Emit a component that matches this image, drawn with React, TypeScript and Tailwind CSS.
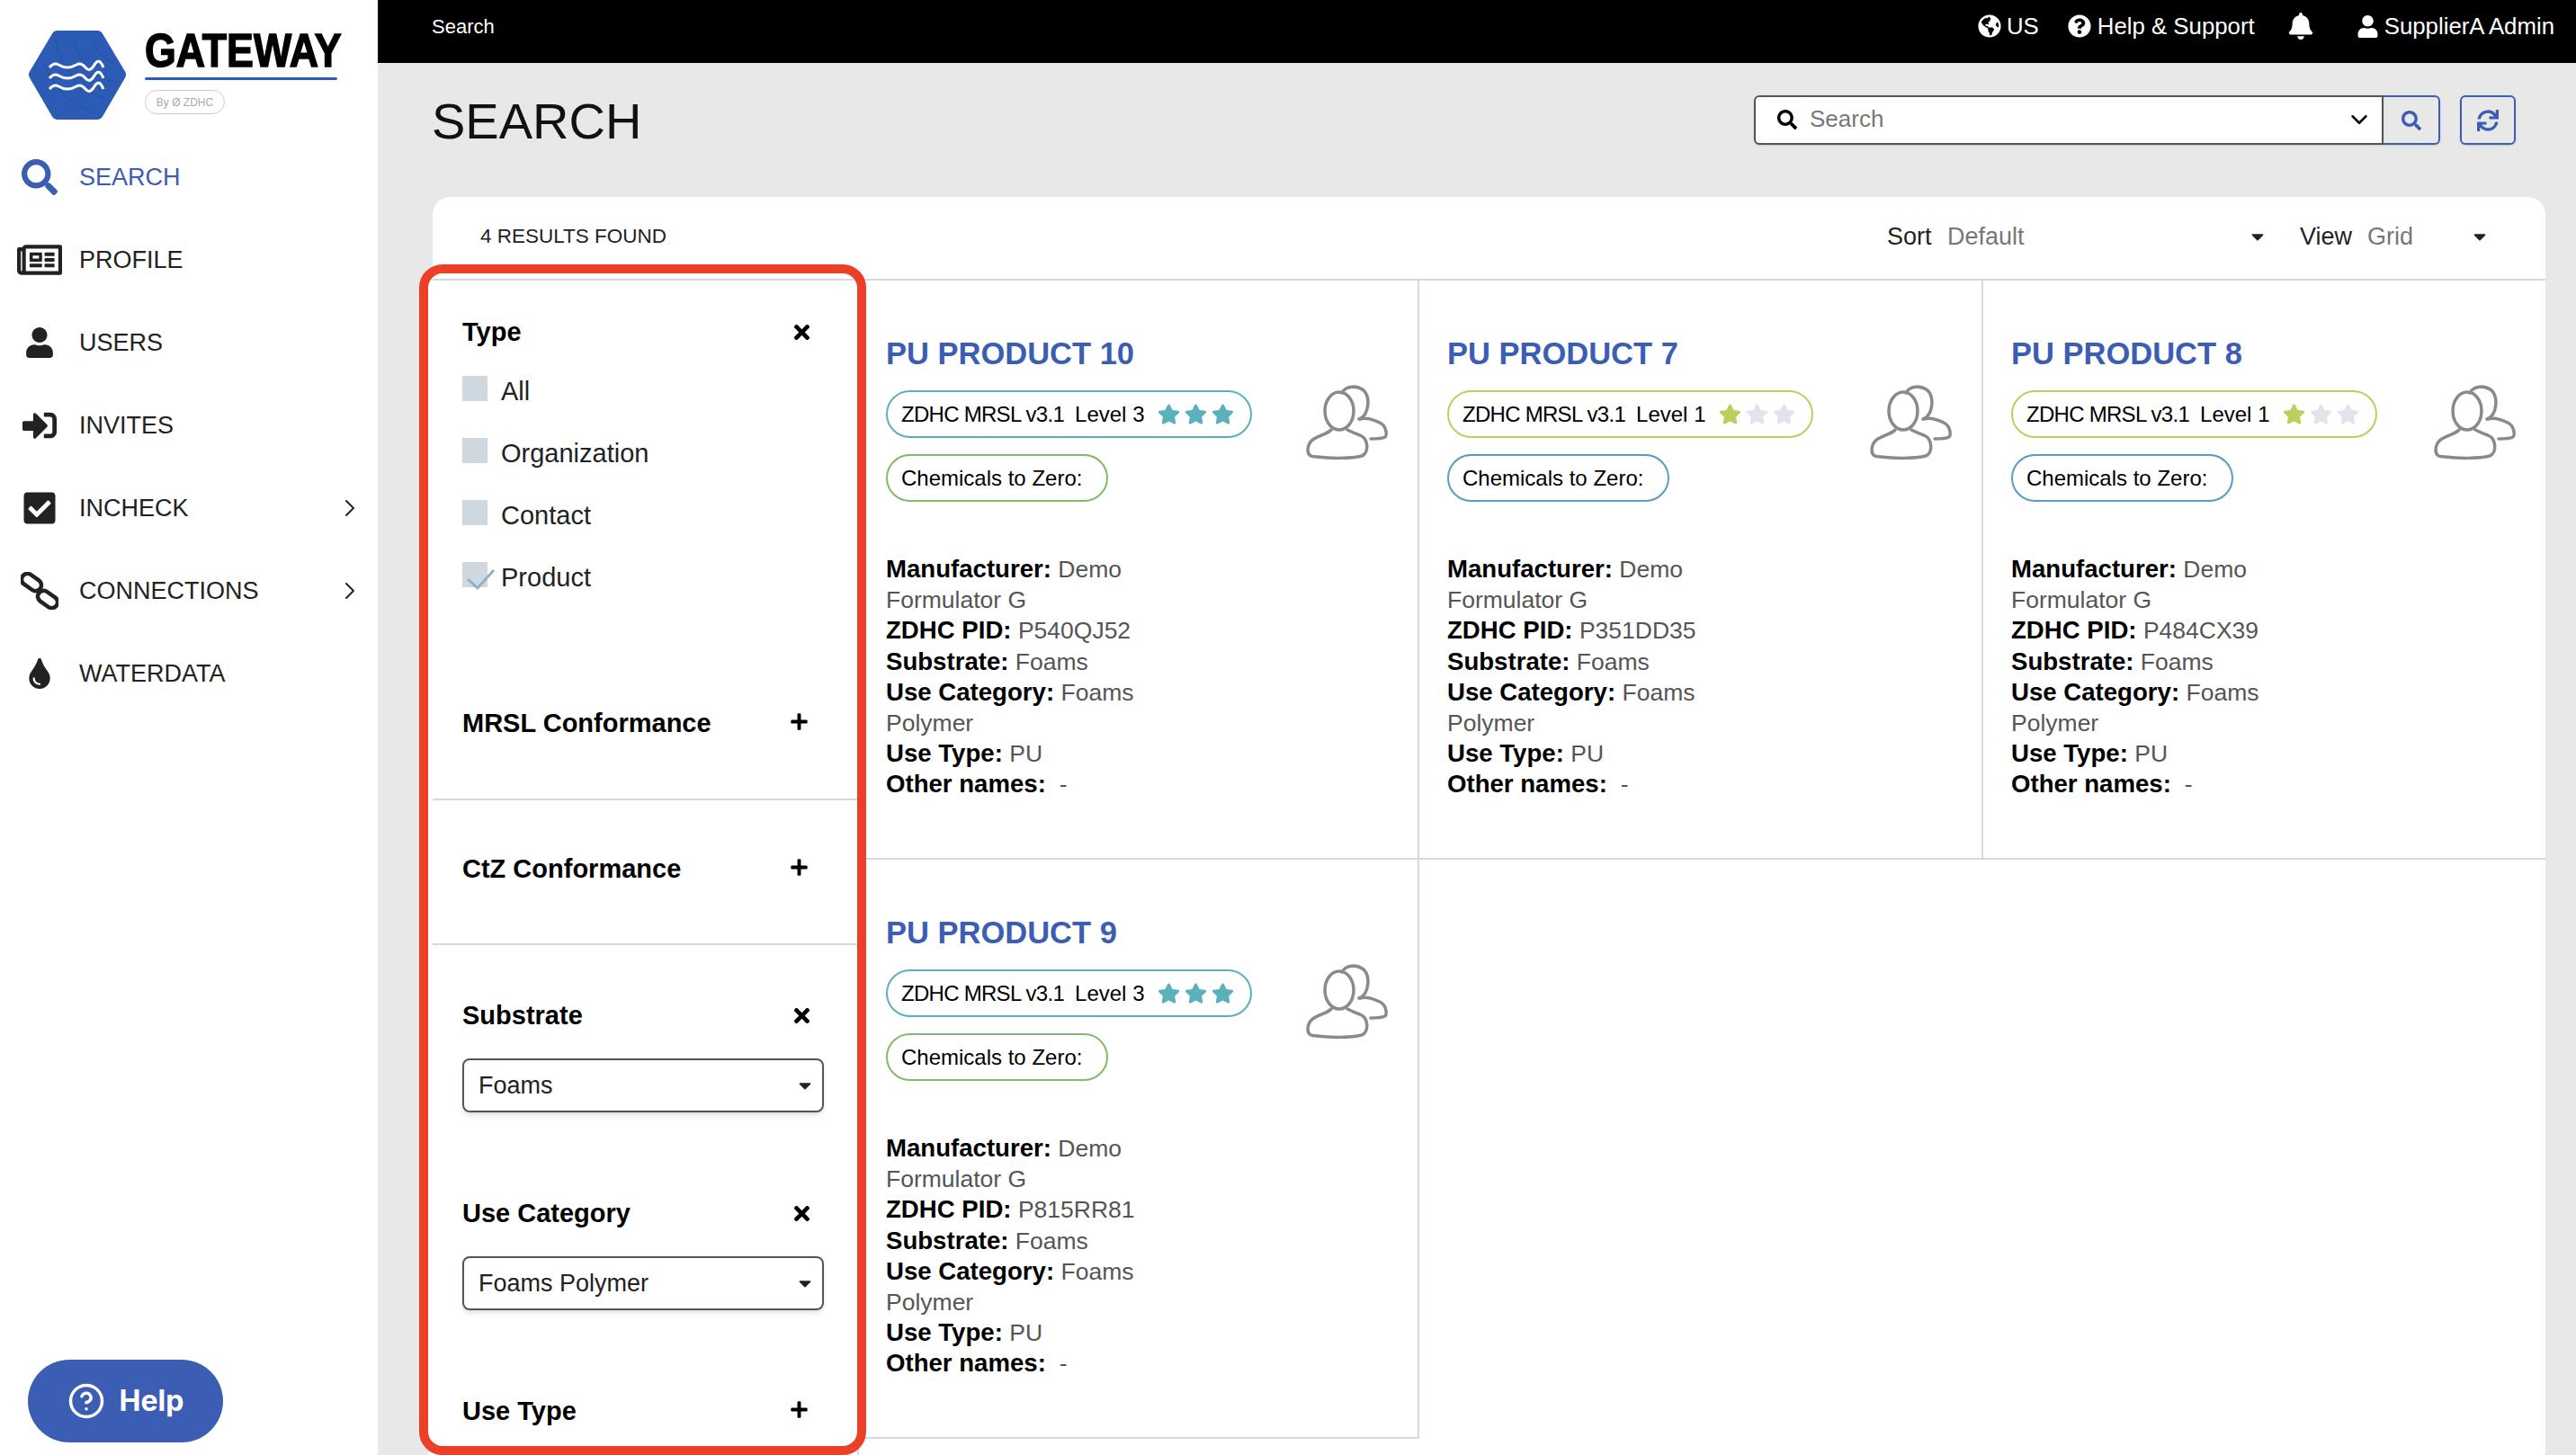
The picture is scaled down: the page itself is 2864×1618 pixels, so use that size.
import React from 'react';
import {
  FaSearch,
  FaRegNewspaper,
  FaUser,
  FaSignInAlt,
  FaCheckSquare,
  FaTint,
  FaGlobeAmericas,
  FaQuestionCircle,
  FaBell,
  FaTimes,
  FaPlus,
  FaSync,
  FaStar,
  FaCaretDown,
} from 'react-icons/fa';
import { ChevronDown, ChevronRight, CircleHelp } from 'lucide-react';

const Logo = () => (
  <div className="flex gap-[20px] pl-[31px] pt-[33px]">
    <svg width="110" height="101" viewBox="0 0 110 101" className="shrink-0">
      <defs>
        <clipPath id="hex">
          <path d="M33 8 H77 L102 50 L77 93 H33 L8 50 Z" />
        </clipPath>
      </defs>
      <path
        d="M33 8 H77 L102 50 L77 93 H33 L8 50 Z"
        fill="#2c5bb5"
        stroke="#2c5bb5"
        strokeWidth="14"
        strokeLinejoin="round"
      />
      <g fill="none" stroke="#2450a3" strokeWidth="1" clipPath="url(#hex)">
        <circle cx="110" cy="0" r="40" />
        <circle cx="110" cy="0" r="60" />
        <circle cx="110" cy="0" r="80" />
        <circle cx="110" cy="0" r="100" />
      </g>
      <g fill="none" stroke="#fff" strokeWidth="3">
        <path d="M24 42 q 5 -6 10 -3 t 10 3 t 10 -3 t 10 3 t 10 -3 t 10 3" />
        <path d="M24 54 q 5 -6 10 -3 t 10 3 t 10 -3 t 10 3 t 10 -3 t 10 3" />
        <path d="M24 66 q 5 -6 10 -3 t 10 3 t 10 -3 t 10 3 t 10 -3 t 10 3" />
      </g>
    </svg>
    <div className="flex flex-col items-start">
      <div className="h-[46px] w-[218px] text-[52px] font-bold leading-[46px] text-black origin-left scale-x-[0.86] [-webkit-text-stroke:1.5px_black] whitespace-nowrap">
        GATEWAY
      </div>
      <div className="mt-[7px] h-[3px] w-[214px] rounded-full bg-[#2c5bb5]" />
      <div className="mt-[11px] flex h-[27px] w-[89px] items-center justify-center rounded-full border border-[#ccc] text-[12px] text-[#aaa]">
        By Ø ZDHC
      </div>
    </div>
  </div>
);

const ChainIcon = () => (
  <svg width="42" height="42" viewBox="0 0 42 42" fill="none" stroke="#222" strokeWidth="4.5">
    <rect x="0" y="5" width="24" height="13" rx="6.5" transform="rotate(35 12 11.5)" />
    <rect x="18" y="24" width="24" height="13" rx="6.5" transform="rotate(35 30 30.5)" />
  </svg>
);

const navItems = [
  { label: 'SEARCH', icon: <FaSearch size={40} />, active: true },
  { label: 'PROFILE', icon: <FaRegNewspaper size={50} /> },
  { label: 'USERS', icon: <FaUser size={34} /> },
  { label: 'INVITES', icon: <FaSignInAlt size={38} /> },
  { label: 'INCHECK', icon: <FaCheckSquare size={40} />, more: true },
  { label: 'CONNECTIONS', icon: <ChainIcon />, more: true },
  { label: 'WATERDATA', icon: <FaTint size={34} /> },
];

const Sidebar = () => (
  <aside className="flex w-[420px] shrink-0 flex-col bg-white pb-[14px]">
    <Logo />
    <nav className="mt-[17px]">
      {navItems.map((item) => (
        <div
          key={item.label}
          className={`flex h-[92px] items-center pr-[15px] text-[27px] ${item.active ? 'text-[#3b5db4]' : 'text-[#222]'}`}
        >
          <span className="flex w-[88px] shrink-0 justify-center">{item.icon}</span>
          <span className="flex-1">{item.label}</span>
          {item.more && <ChevronRight size={32} strokeWidth={1.5} />}
        </div>
      ))}
    </nav>
    <div className="ml-[31px] mt-auto flex h-[92px] w-[217px] items-center justify-center gap-[16px] rounded-full bg-[#3b5db4] font-['Inter',sans-serif] text-[32px] font-bold text-white">
      <CircleHelp size={42} strokeWidth={2} />
      Help
    </div>
  </aside>
);

const TopBar = () => (
  <header className="flex h-[70px] shrink-0 items-center bg-black pb-[12px] pl-[60px] pr-[24px] text-white">
    <span className="text-[22px]">Search</span>
    <div className="ml-auto flex items-center text-[25.8px]">
      <FaGlobeAmericas size={26} />
      <span className="ml-[6px]">US</span>
      <FaQuestionCircle size={26} className="ml-[32px]" />
      <span className="ml-[7px]">Help &amp; Support</span>
      <FaBell size={30} className="ml-[36px]" />
      <FaUser size={25} className="ml-[47px]" />
      <span className="ml-[6px]">SupplierA Admin</span>
    </div>
  </header>
);

const TitleRow = () => (
  <div className="flex h-[149px] shrink-0 items-start pl-[60px] pr-[67px]">
    <h1 className="mt-[30px] text-[56px] leading-[70px] text-[#111]">SEARCH</h1>
    <div className="ml-auto mt-[36px] flex">
      <div className="flex h-[55px] w-[700px] items-center rounded-l-[6px] border-2 border-[#555] bg-white pb-[2px] pl-[24px] pr-[10px] text-[26px] text-[#777] shadow-sm">
        <FaSearch size={22} className="text-black" />
        <span className="ml-[14px]">Search</span>
        <ChevronDown size={30} className="ml-auto text-black" />
      </div>
      <div className="flex h-[55px] w-[63px] items-center justify-center rounded-r-[6px] border-2 border-l-0 border-[#3b5db4] text-[#3b5db4] shadow-sm">
        <FaSearch size={22} />
      </div>
      <div className="ml-[22px] flex h-[55px] w-[62px] items-center justify-center rounded-[6px] border-2 border-[#3b5db4] text-[#3b5db4] shadow-sm">
        <FaSync size={24} />
      </div>
    </div>
  </div>
);

const ResultsHeader = () => (
  <div className="flex h-[93px] shrink-0 items-center border-b-2 border-[#d3d9dd] pb-[3px] pl-[53px] pr-[62px]">
    <span className="text-[22.5px] text-[#222]">4 RESULTS FOUND</span>
    <span className="ml-auto w-[67px] text-[27px] text-[#222]">Sort</span>
    <span className="w-[334px] text-[27px] text-[#777]">Default</span>
    <FaCaretDown size={22} className="text-[#222]" />
    <span className="ml-[36px] w-[75px] text-[27px] text-[#222]">View</span>
    <span className="w-[114px] text-[27px] text-[#777]">Grid</span>
    <FaCaretDown size={22} className="text-[#222]" />
  </div>
);

const Check = ({ label, checked }: { label: string; checked?: boolean }) => (
  <div className="flex h-[69px] items-center">
    <span className="relative -mt-[4px] h-[28px] w-[28px] shrink-0 bg-[#cfd8de]">
      {checked && (
        <svg width="40" height="34" className="absolute left-0 top-0 overflow-visible">
          <path d="M6 19 L17 29 L35 9" fill="none" stroke="#8fb0c6" strokeWidth="3" />
        </svg>
      )}
    </span>
    <span className="ml-[15px] pt-[4px] text-[29px] text-[#222]">{label}</span>
  </div>
);

const FilterHead = ({ title, open, className }: { title: string; open?: boolean; className?: string }) => (
  <div className={`flex h-[36px] items-center justify-between text-[29px] font-bold leading-[36px] text-black ${open ? 'pr-[49px]' : 'pr-[54px]'} ${className ?? ''}`}>
    <span className="pt-[2px]">{title}</span>
    {open ? <FaTimes size={25} className="mt-[3px]" /> : <FaPlus size={21} className="-mt-[2px]" />}
  </div>
);

const FilterSelect = ({ value }: { value: string }) => (
  <div className="mt-[31px] flex h-[60px] w-[402px] items-center justify-between rounded-[8px] border-2 border-[#555] pl-[16px] pr-[8px] text-[27px] text-[#222] shadow-md">
    {value}
    <FaCaretDown size={22} className="text-[#222]" />
  </div>
);

const Filters = () => (
  <div className="-ml-[5px] w-[479px] shrink-0 border-r-2 border-[#d3d9dd] bg-white pt-[38px]">
    <div className="pl-[38px]">
      <FilterHead title="Type" open />
      <div className="mt-[13px]">
        <Check label="All" />
        <Check label="Organization" />
        <Check label="Contact" />
        <Check label="Product" checked />
      </div>
      <FilterHead title="MRSL Conformance" className="mt-[110px]" />
    </div>
    <div className="ml-[5px] mt-[67px] border-t-2 border-[#d3d9dd] pl-[33px] pt-[57px]">
      <FilterHead title="CtZ Conformance" />
    </div>
    <div className="ml-[5px] mt-[66px] border-t-2 border-[#d3d9dd] pl-[33px] pt-[59px]">
      <FilterHead title="Substrate" open />
      <FilterSelect value="Foams" />
      <FilterHead title="Use Category" open className="mt-[93px]" />
      <FilterSelect value="Foams Polymer" />
      <FilterHead title="Use Type" className="mt-[93px]" />
    </div>
  </div>
);

const Users = () => (
  <svg width="92" height="84" viewBox="0 0 92 84" className="mt-[57px] shrink-0 blur-[0.6px]">
    <g fill="none" stroke="#8a8a8a" strokeWidth="3.5" strokeLinecap="round">
      <ellipse cx="37" cy="29" rx="16" ry="21" />
      <path d="M28 50 C 22 57 3 56 2 72 C 2 79 6 80 12 80 C 28 82 50 82 62 79 C 70 76 70 60 60 56 C 54 54 50 52 46 50" />
      <path d="M40 9 C 44 1 56 0 64 6 C 72 14 70 34 59 38" />
      <path d="M60 38 C 66 36 74 38 82 42 C 90 46 90 56 88 58 C 84 60 78 60 72 60" />
    </g>
  </svg>
);

type Product = {
  name: string;
  level: number;
  pid: string;
};

const products: Product[] = [
  { name: 'PU PRODUCT 10', level: 3, pid: 'P540QJ52' },
  { name: 'PU PRODUCT 7', level: 1, pid: 'P351DD35' },
  { name: 'PU PRODUCT 8', level: 1, pid: 'P484CX39' },
  { name: 'PU PRODUCT 9', level: 3, pid: 'P815RR81' },
];

const Field = ({ label, value, more }: { label: string; value: string; more?: string }) => (
  <>
    <div>
      <b className="text-[27.6px] font-bold text-black">{label}</b> <span>{value}</span>
    </div>
    {more && <div>{more}</div>}
  </>
);

const Card = ({ p, first, last }: { p: Product; first?: boolean; last?: boolean }) => {
  const high = p.level === 3;
  return (
    <div className={`border-b-2 border-[#d3d9dd] pt-[59px] ${first ? 'pl-[30px]' : 'pl-[31px]'} ${last ? '' : 'border-r-2'}`}>
      <div className="flex items-start justify-between pr-[32px]">
        <div>
          <h2 className="text-[34.5px] font-bold leading-[44px] text-[#3b5db4]">{p.name}</h2>
          <div
            className={`mt-[19px] flex h-[53px] items-center rounded-full border-2 pl-[15px] pr-[18px] text-[24px] text-black ${high ? 'border-[#5bb1bb]' : 'border-[#bccf5d]'}`}
          >
            <span className="tracking-[-0.03em]">ZDHC MRSL v3.1</span>
            <span className="ml-[12px]">Level {p.level}</span>
            <span className="ml-[15px] flex gap-[5px]">
              {[1, 2, 3].map((n) => (
                <FaStar
                  key={n}
                  size={25}
                  className={n <= p.level ? (high ? 'text-[#5bb1bb]' : 'text-[#bccf5d]') : 'text-[#e1e4ea]'}
                />
              ))}
            </span>
          </div>
          <div
            className={`mt-[18px] flex h-[53px] w-fit items-center rounded-full border-2 pl-[15px] pr-[27px] text-[24px] text-black ${high ? 'border-[#85ba6a]' : 'border-[#5b9cc3]'}`}
          >
            Chemicals to Zero:
          </div>
        </div>
        <Users />
      </div>
      <div className="mt-[58px] text-[26.5px] leading-[34.2px] text-[#555]">
        <Field label="Manufacturer:" value="Demo" more="Formulator G" />
        <Field label="ZDHC PID:" value={p.pid} />
        <Field label="Substrate:" value="Foams" />
        <Field label="Use Category:" value="Foams" more="Polymer" />
        <Field label="Use Type:" value="PU" />
        <Field label="Other names:" value={'\u00a0-'} />
      </div>
    </div>
  );
};

export default function App() {
  return (
    <div className="relative flex h-[1618px] w-[2864px] overflow-hidden bg-[#e8e8e8] font-['Liberation_Sans',Arial,sans-serif]">
      <Sidebar />
      <main className="relative flex min-w-0 flex-1 flex-col">
        <TopBar />
        <TitleRow />
        <section className="ml-[61px] mr-[34px] flex min-h-0 flex-1 flex-col rounded-t-[20px] bg-white">
          <ResultsHeader />
          <div className="flex min-h-0 flex-1">
            <Filters />
            <div className="grid flex-1 grid-cols-[623px_627px_1fr] auto-rows-[644px]">
              {products.map((p, i) => (
                <Card key={p.name} p={p} first={i % 3 === 0} last={i === 2} />
              ))}
            </div>
          </div>
        </section>
        {/* annotation frame */}
        <div className="pointer-events-none absolute left-[46px] top-[294px] h-[1324px] w-[497px] rounded-[26px] border-[10px] border-[#eb4027]" />
      </main>
    </div>
  );
}
